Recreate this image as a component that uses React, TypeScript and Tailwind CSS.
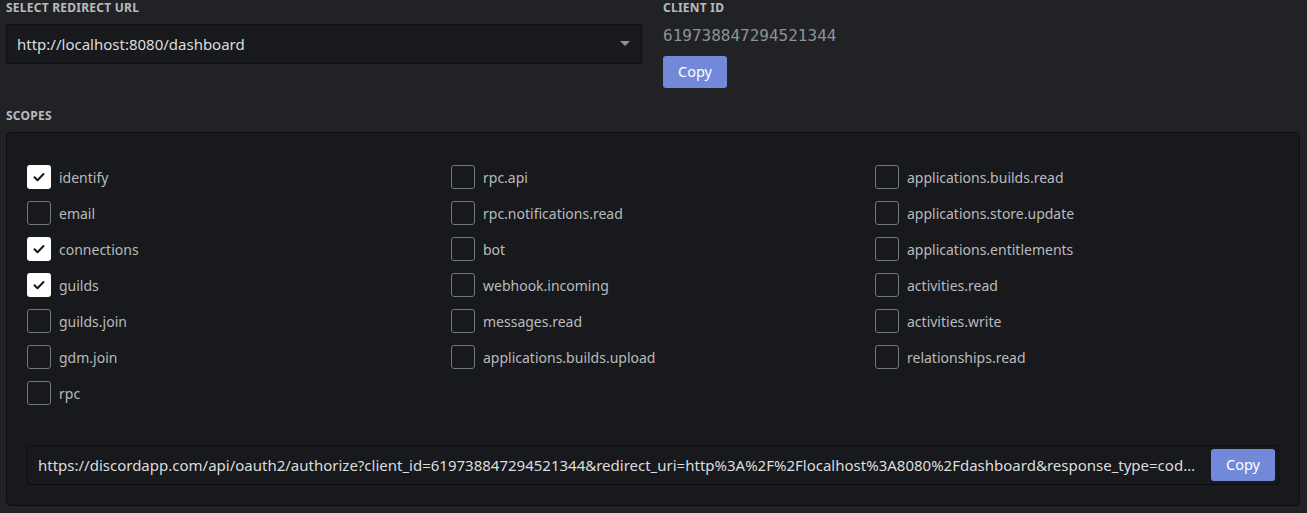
import { useState } from 'react';

const columns: { name: string; checked?: boolean }[][] = [
  [
    { name: 'identify', checked: true },
    { name: 'email' },
    { name: 'connections', checked: true },
    { name: 'guilds', checked: true },
    { name: 'guilds.join' },
    { name: 'gdm.join' },
    { name: 'rpc' },
  ],
  [
    { name: 'rpc.api' },
    { name: 'rpc.notifications.read' },
    { name: 'bot' },
    { name: 'webhook.incoming' },
    { name: 'messages.read' },
    { name: 'applications.builds.upload' },
  ],
  [
    { name: 'applications.builds.read' },
    { name: 'applications.store.update' },
    { name: 'applications.entitlements' },
    { name: 'activities.read' },
    { name: 'activities.write' },
    { name: 'relationships.read' },
  ],
];

const authUrl =
  'https://discordapp.com/api/oauth2/authorize?client_id=619738847294521344&redirect_uri=http%3A%2F%2Flocalhost%3A8080%2Fdashboard&response_type=code&scope=identify%20connections%20guilds';

function Scope({ name, initial }: { name: string; initial?: boolean }) {
  const [checked, setChecked] = useState(!!initial);
  return (
    <label className="flex h-9 items-center gap-2 cursor-pointer" onClick={() => setChecked(!checked)}>
      {checked ? (
        <span className="flex h-6 w-6 items-center justify-center rounded-[3px] bg-white">
          <svg width="14" height="14" viewBox="0 0 14 14" fill="none">
            <path d="M2.5 7.2l3 3 6-6.2" stroke="#18191c" strokeWidth="2" strokeLinecap="round" strokeLinejoin="round" />
          </svg>
        </span>
      ) : (
        <span className="h-6 w-6 rounded-[3px] border border-[#72767d]" />
      )}
      <span className="text-[14px] text-[#b9bbbe]">{name}</span>
    </label>
  );
}

export default function App() {
  return (
    <div className="min-h-[513px] bg-[#202225] px-[6px] pb-2 font-['Noto_Sans',sans-serif]">
      <div className="flex gap-[21px]">
        <div className="w-[636px]">
          <div className="h-4 text-[12px] font-bold leading-4 tracking-[0.02em] text-[#b9bbbe] uppercase">Select redirect URL</div>
          <div className="mt-2 flex h-10 items-center justify-between rounded-[3px] border border-[#0f1012] bg-[#18191c] pl-[10px] pr-[10px]">
            <span className="text-[15px] text-[#dcddde]">http://localhost:8080/dashboard</span>
            <svg width="12" height="8" viewBox="0 0 12 8">
              <path d="M1 1h10L6 6z" fill="#8e9297" />
            </svg>
          </div>
        </div>
        <div>
          <div className="h-4 text-[12px] font-bold leading-4 tracking-[0.02em] text-[#b9bbbe] uppercase">Client ID</div>
          <div className="mt-2 h-6 font-['DejaVu_Sans_Mono',monospace] text-[16px] leading-6 text-[#8e9297]">619738847294521344</div>
          <button className="mt-2 h-8 w-16 rounded-[3px] bg-[#7289da] text-[14.5px] text-white">Copy</button>
        </div>
      </div>

      <div className="mt-5 h-4 text-[12px] font-bold leading-4 tracking-[0.02em] text-[#b9bbbe] uppercase">Scopes</div>
      <div className="mt-2 w-[1294px] rounded-[5px] border border-[#0c0d0f] bg-[#18191c] px-5 pt-[26px] pb-5">
        <div className="grid grid-cols-[424px_424px_1fr]">
          {columns.map((col, i) => (
            <div key={i} className="flex flex-col">
              {col.map((s) => (
                <Scope key={s.name} name={s.name} initial={s.checked} />
              ))}
            </div>
          ))}
        </div>
        <div className="mt-[34px] flex h-10 items-center gap-4 rounded-[3px] border border-[#0c0d0f] bg-[#18191c] pl-[10px] pr-[3px]">
          <span className="min-w-0 flex-1 truncate text-[15px] text-[#dcddde]">{authUrl}</span>
          <button className="h-8 w-16 shrink-0 rounded-[3px] bg-[#7289da] text-[14.5px] text-white">Copy</button>
        </div>
      </div>
    </div>
  );
}
